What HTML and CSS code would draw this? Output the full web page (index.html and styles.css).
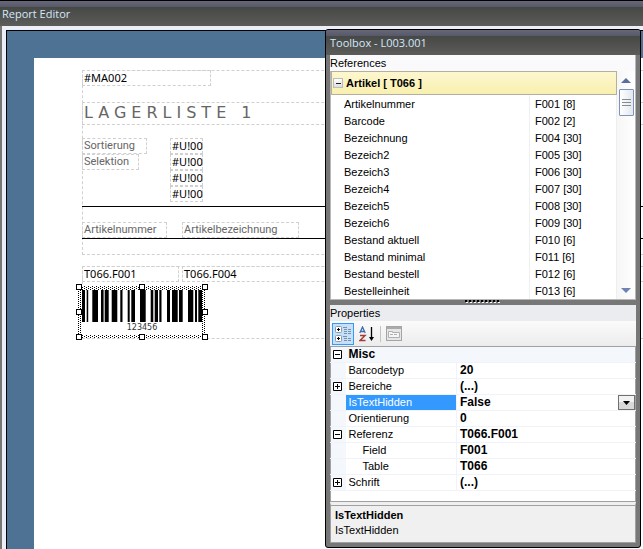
FILE: index.html
```html
<!DOCTYPE html>
<html lang="de">
<head>
<meta charset="utf-8">
<title>Report Editor</title>
<link rel="stylesheet" href="styles.css">
</head>
<body>
<div class="app">
  <header class="titlebar app-title">Report Editor</header>
  <main class="workspace">
    <div class="sheet">
      <section class="band band-header">
        <div class="field f-company">#MA002</div>
        <div class="field f-title">LAGERLISTE 1</div>
        <div class="field muted f-sort">Sortierung</div>
        <div class="field muted f-selection">Selektion</div>
        <div class="params">
          <div class="field">#U!00</div>
          <div class="field">#U!00</div>
          <div class="field">#U!00</div>
          <div class="field">#U!00</div>
        </div>
        <div class="rule r-top"></div>
        <div class="field muted f-number">Artikelnummer</div>
        <div class="field muted f-name">Artikelbezeichnung</div>
        <div class="rule r-bottom"></div>
      </section>
      <section class="band band-detail">
        <div class="field d-number">T066.F001</div>
        <div class="field d-name">T066.F004</div>
        <svg class="barcode" width="132" height="56" viewBox="0 0 132 56">
          <defs>
            <pattern id="dots" width="4" height="4" patternUnits="userSpaceOnUse">
              <rect width="4" height="4" fill="#fff"/>
              <path d="M0 0h1v1H0zM2 1h1v1H2zM0 2h1v1H0zM2 3h1v1H2z" fill="#000"/>
            </pattern>
          </defs>
          <rect x="2" y="2" width="128" height="52" fill="url(#dots)"/>
          <rect x="6" y="6" width="120" height="45" fill="#fff"/>
          <path transform="translate(6 6)" fill="#000" d="M0 0h3v32H0zM4.7 0h1.500v32h-1.500zM10.300 0H16v32h-5.700zM19 0h2.600v32H19zM22.700 0h4v32h-4zM29.700 0h5.600v32h-5.600zM38.300 0h2.200v32h-2.200zM45.700 0h2v32h-2zM49.300 0H53v32h-3.700zM58 0h5.700v32H58zM68.700 0h2.600v32h-2.600zM72.700 0H76v32h-3.300zM77.300 0h2.200v32h-2.200zM85 0h3v32h-3zM90 0h5.700v32H90zM97 0h3.700v32H97zM106 0h5.300v32H106zM113 0h2v32h-2zM116.300 0h3.700v32h-3.700z"/>
          <text x="66" y="46" text-anchor="middle">123456</text>
          <g fill="#fff" stroke="#000" stroke-width="1">
            <rect x=".5" y=".5" width="5" height="5"/><rect x="63.5" y=".5" width="5" height="5"/><rect x="126.5" y=".5" width="5" height="5"/>
            <rect x=".5" y="25.5" width="5" height="5"/><rect x="126.5" y="25.5" width="5" height="5"/>
            <rect x=".5" y="50.5" width="5" height="5"/><rect x="63.5" y="50.5" width="5" height="5"/><rect x="126.5" y="50.5" width="5" height="5"/>
          </g>
        </svg>
      </section>
    </div>
  </main>
</div>

<aside class="toolbox">
  <header class="titlebar toolbox-title">Toolbox - L003.001</header>
  <div class="toolbox-body">
    <section class="references">
      <h2 class="caption">References</h2>
      <div class="ref-view">
        <div class="ref-list">
          <div class="group">
            <button class="group-toggle" aria-label="Artikel"><svg width="9" height="9"><path d="M2 4.5h5" stroke="#222"/></svg></button>
            Artikel [ T066 ]
          </div>
          <table class="ref-table">
            <tr><td>Artikelnummer</td><td>F001 [8]</td></tr>
            <tr><td>Barcode</td><td>F002 [2]</td></tr>
            <tr><td>Bezeichnung</td><td>F004 [30]</td></tr>
            <tr><td>Bezeich2</td><td>F005 [30]</td></tr>
            <tr><td>Bezeich3</td><td>F006 [30]</td></tr>
            <tr><td>Bezeich4</td><td>F007 [30]</td></tr>
            <tr><td>Bezeich5</td><td>F008 [30]</td></tr>
            <tr><td>Bezeich6</td><td>F009 [30]</td></tr>
            <tr><td>Bestand aktuell</td><td>F010 [6]</td></tr>
            <tr><td>Bestand minimal</td><td>F011 [6]</td></tr>
            <tr><td>Bestand bestell</td><td>F012 [6]</td></tr>
            <tr><td>Bestelleinheit</td><td>F013 [6]</td></tr>
          </table>
        </div>
        <div class="scrollbar">
          <button class="arrow" aria-label="Up"><svg width="10" height="5"><path d="M0 5L5 0l5 5z" fill="#5c6c9c"/></svg></button>
          <div class="thumb"><svg width="9" height="8"><path d="M0 .5h9M0 3.5h9M0 6.5h9" stroke="#8a8a8a"/></svg></div>
          <button class="arrow arrow-down" aria-label="Down"><svg width="10" height="5"><path d="M0 0h10L5 5z" fill="#7082b4"/></svg></button>
        </div>
      </div>
    </section>
    <div class="splitter"><svg width="36" height="3"><path d="M1 2.5h35" stroke="#fff" stroke-width="1" stroke-dasharray="2 2"/><path d="M0 1h36" stroke="#000" stroke-width="2" stroke-dasharray="2 2"/></svg></div>
    <section class="properties">
      <h2 class="caption caption-grey">Properties</h2>
      <div class="tools">
        <button class="tool tool-on" aria-label="Categorized">
          <svg width="17" height="18"><g fill="#fff" stroke="#8a98a8"><rect x=".5" y="1.5" width="6" height="6" rx="1"/><rect x=".5" y="10.500" width="6" height="6" rx="1"/></g><path d="M2 4.500h3M3.500 3v3M2 13.500h3M3.500 12v3" stroke="#000"/><path d="M8 2.500h4M9 4.500h3M9 6.500h3M9 8.500h3M8 11.500h4M9 13.500h3M9 15.500h3M13 4.500h3M13 6.500h3M13 8.500h3M13 13.500h3M13 15.500h3" stroke="#7d8da8"/></svg>
        </button>
        <button class="tool" aria-label="Alphabetical">
          <svg width="16" height="16"><path d="M.8 7L3.500 1l2.700 6M2 5.500h3" fill="none" stroke="#3c6cae" stroke-width="1.300"/><path d="M1 9.500h5L1 14.500h5.500" fill="none" stroke="#a03c3c" stroke-width="1.500"/><path d="M12.500 1v11" stroke="#000" stroke-width="1.300"/><path d="M10 11h5l-2.500 4z"/></svg>
        </button>
        <span class="divider"></span>
        <button class="tool" aria-label="Property Pages" disabled>
          <svg width="16" height="15"><rect x=".5" y=".5" width="15" height="14" fill="#e6e6e6" stroke="#a5a5a5"/><path d="M1 2h14" stroke="#aaa" stroke-width="2"/><path d="M2.500 11.500v-6h4v1h7v5zM4 8.500h3M8 8.500h3" fill="#f6f6f6" stroke="#b0b0b0"/></svg>
        </button>
      </div>
      <table class="grid">
        <colgroup><col class="col-gutter"><col class="col-name"><col></colgroup>
        <tr class="category"><td class="gutter"><button class="box" aria-label="Misc"><svg width="9" height="9"><path d="M.5.5h8v8h-8zM2 4.500h5" fill="none" stroke="#000"/></svg></button></td><th colspan="2">Misc</th></tr>
        <tr><td class="gutter"></td><td>Barcodetyp</td><td>20</td></tr>
        <tr><td class="gutter"><button class="box" aria-label="Bereiche"><svg width="9" height="9"><path d="M.5.5h8v8h-8zM2 4.500h5M4.500 2v5" fill="none" stroke="#000"/></svg></button></td><td>Bereiche</td><td>(...)</td></tr>
        <tr class="selected"><td class="gutter"></td><td><label for="hidden">IsTextHidden</label></td><td>
          <div class="picker"><select id="hidden"><option>False</option><option>True</option></select><span class="drop"><svg width="7" height="4"><path d="M0 0h7L3.500 4z"/></svg></span></div></td></tr>
        <tr><td class="gutter"></td><td>Orientierung</td><td>0</td></tr>
        <tr><td class="gutter"><button class="box" aria-label="Referenz"><svg width="9" height="9"><path d="M.5.5h8v8h-8zM2 4.500h5" fill="none" stroke="#000"/></svg></button></td><td>Referenz</td><td>T066.F001</td></tr>
        <tr class="child"><td class="gutter"></td><td>Field</td><td>F001</td></tr>
        <tr class="child"><td class="gutter"></td><td>Table</td><td>T066</td></tr>
        <tr><td class="gutter"><button class="box" aria-label="Schrift"><svg width="9" height="9"><path d="M.5.5h8v8h-8zM2 4.500h5M4.500 2v5" fill="none" stroke="#000"/></svg></button></td><td>Schrift</td><td>(...)</td></tr>
      </table>
      <div class="grid-rest"></div>
      <div class="help"><strong>IsTextHidden</strong><p>IsTextHidden</p></div>
    </section>
  </div>
</aside>
</body>
</html>
```
FILE: styles.css
```css
* { box-sizing: border-box; }

body {
  margin: 0;
  overflow: hidden;
  font: 11px "Liberation Sans", sans-serif;
  color: #000;
  background: #777;
}

button { margin: 0; padding: 0; border: 0; background: none; font: inherit; }
svg { display: block; }
table { border-collapse: collapse; width: 100%; table-layout: fixed; }
td, th { padding: 0; text-align: left; }

/* Main window */
.app { display: flex; flex-direction: column; height: 100vh; }

.titlebar {
  font-family: "Open Sans", sans-serif;
  font-size: 11px;
  color: #d4e8fa;
}
.app-title {
  height: 26px;
  padding: 5px 2px 0;
  line-height: 16px;
  border-top: 1px solid #000;
  background: linear-gradient(#66687a, #575969 6px, #464846 6px, #5c5c5a);
}
.workspace {
  flex: 1;
  min-height: 0;
  display: flex;
  margin-left: 2px;
  border: solid #eeeef6;
  border-width: 4px 0 0 4px;
  box-shadow: inset 1px 1px #000;
  padding: 28px 0 0 28px;
  overflow: hidden;
  background: #4e7294;
}

/* Report design surface: fields sit at free positions inside their band */
.sheet { position: relative; flex: 1; background: #fff; }
.band { position: absolute; left: 48px; right: 0; border: 1px dashed #d0d0d0; border-right: 0; }
.band-header { top: 12px; height: 185px; }
.band-detail { top: 208px; height: 73px; }
.field {
  position: absolute;
  height: 16px;
  padding: 0 1px;
  border: 1px dashed #d0d0d0;
  font-family: "Noto Sans", sans-serif;
  line-height: 13px;
  white-space: nowrap;
}
.muted { font-family: Roboto, sans-serif; color: #666; }
.f-company { left: -1px; top: -1px; width: 129px; }
.f-title {
  left: -1px;
  right: 0;
  top: 31px;
  height: 23px;
  border-right: 0;
  font: 16px/20px "DejaVu Sans", sans-serif;
  letter-spacing: 5px;
  color: #666;
}
.f-sort { left: -1px; top: 67px; width: 65px; }
.f-selection { left: -1px; top: 83px; width: 57px; }
.params { position: absolute; left: 87px; top: 67px; width: 33px; }
.params .field { position: static; }
.rule { position: absolute; left: -1px; right: 0; height: 1px; background: #000; }
.r-top { top: 135px; }
.r-bottom { top: 167px; }
.f-number { left: -1px; top: 151px; width: 85px; }
.f-name { left: 99px; top: 151px; width: 117px; }
.d-number { left: -1px; top: -1px; width: 97px; }
.d-name { left: 99px; right: 0; top: -1px; border-right: 0; }
.barcode { position: absolute; left: -7px; top: 17px; }
.barcode text { font: 8px "DejaVu Sans", sans-serif; fill: #333; }

/* Floating toolbox */
.toolbox {
  position: absolute;
  left: 325px;
  right: 2px;
  top: 29px;
  border: 1px solid #000;
  border-radius: 3px;
  background: #777;
  overflow: hidden;
}
.toolbox-title {
  height: 25px;
  padding: 5px 4px 0;
  line-height: 16px;
  background: linear-gradient(#66687a, #575969 6px, #464846 6px, #5c5c5a);
}
.toolbox-body { padding: 0 4px 4px; }
.caption { margin: 0; padding: 0; font-size: 11px; font-weight: 400; line-height: 16px; background: #fafafc; }
.caption-grey { background: #ebecf0; }

.references { border-right: 1px solid #b8b8b8; border-bottom: 1px solid #b8b8b8; }
.ref-view { display: flex; background: #fff; }
.ref-list { flex: 1; border-left: 1px solid #b8b8b8; }
.group {
  display: flex;
  align-items: center;
  gap: 3px;
  height: 24px;
  padding-left: 1px;
  border: 1px solid #b4b09c;
  font-weight: 700;
  background: linear-gradient(#fdf7cf, #f9efb0);
}
.group-toggle { border: 1px solid #bcbcbc; background: linear-gradient(#fff, #ddd); }
.group-toggle svg { width: 8px; height: 8px; }
.ref-table { border-right: 1px solid #eee; }
.ref-table td { height: 17px; padding: 2px 0 0 13px; line-height: 15px; }
.ref-table td:last-child { width: 87px; padding-left: 5px; border-left: 1px solid #f0f0f0; }
.scrollbar {
  display: flex;
  flex-direction: column;
  align-items: center;
  width: 18px;
  background: linear-gradient(90deg, #f6f6f6, #fff);
}
.arrow { display: flex; align-items: center; justify-content: center; width: 16px; height: 18px; }
.arrow-down { margin-top: auto; }
.thumb {
  display: flex;
  align-items: center;
  justify-content: center;
  width: 15px;
  height: 27px;
  border: 1px solid #7f93b8;
  border-radius: 1px;
  background: linear-gradient(90deg, #fff, #e2e8ee);
}
.splitter { display: flex; justify-content: center; height: 5px; padding: 0; }

/* Property grid */
.tools {
  display: flex;
  align-items: center;
  gap: 2px;
  height: 25px;
  padding: 0 2px;
  background: linear-gradient(#fbfbfb, #ececec);
}
.tool { display: flex; align-items: center; justify-content: center; width: 22px; height: 22px; }
.tool-on { border: 1px solid #3399ff; background: #c6e0fa; }
.divider { width: 1px; height: 16px; background: #c4c4c4; }
.grid { border: solid #a0a0a0; border-width: 1px 1px 0; background: #fff; }
.grid td, .grid th { height: 16px; line-height: 15px; padding-left: 3px; border-bottom: 1px solid #f0f3fa; }
.col-gutter { width: 15px; }
.col-name { width: 111px; }
.grid td.gutter { padding-left: 2px; background: #f4f7fc; }
.grid td:nth-child(2) { border-right: 1px solid #f0f3fa; }
.grid td:last-child, .grid th { font-size: 12px; font-weight: 700; }
.grid .category th { background: #f4f7fc; }
.grid .child td:nth-child(2) { padding-left: 17px; }
.grid .selected td:nth-child(2) { color: #fff; background: #3399ff; }
.box { display: block; background: #fff; }
.picker { position: relative; height: 15px; }
.picker select {
  display: block;
  width: 100%;
  height: 15px;
  margin: 0;
  padding: 0;
  border: 0;
  appearance: none;
  background: none;
  font: inherit;
  color: inherit;
}
.drop {
  position: absolute;
  right: 0;
  top: 0;
  display: flex;
  align-items: center;
  justify-content: center;
  width: 17px;
  height: 15px;
  border: 1px solid #707070;
  background: linear-gradient(#f2f2f2 50%, #d8d8d8 50%);
  pointer-events: none;
}
.grid-rest { height: 11px; border: 1px solid #a0a0a0; border-top: 0; background: #fff; }
.help {
  height: 41px;
  padding: 3px 4px 0;
  border: 1px solid #a0a0a0;
  border-top: 3px solid #f0f0f0;
  box-shadow: inset 0 1px #a0a0a0;
  line-height: 15px;
  background: #f0f0f0;
}
.help strong { display: block; }
.help p { margin: 0; }
```
